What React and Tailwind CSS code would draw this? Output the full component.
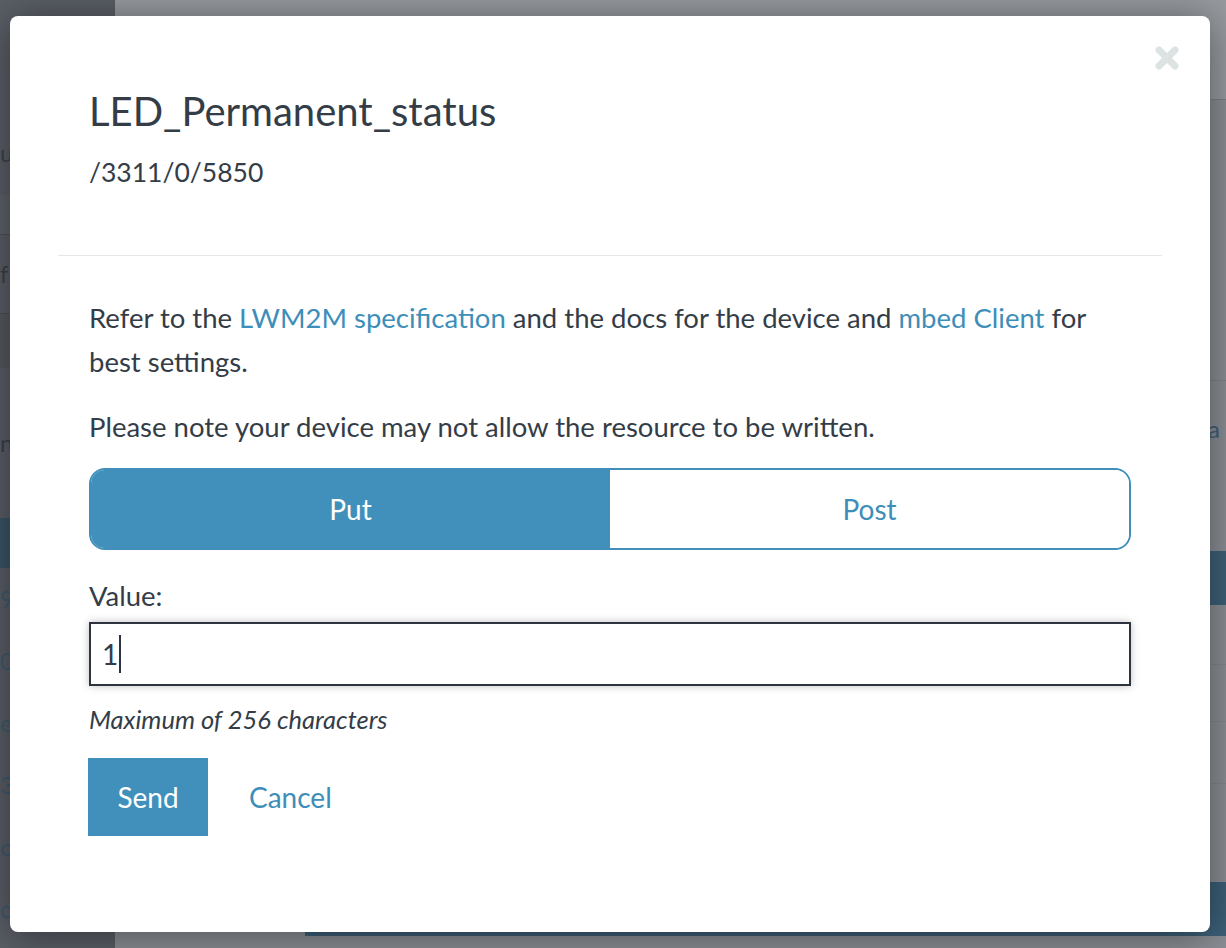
import React, { useState } from 'react';

const SIDE_ROWS = ['9.', '0.', 'e.', '3.', 'o.', 'c.'];

const Backdrop = () => {
  return (
    <div className="flex h-full w-full">
      <aside className="flex w-[115px] flex-col bg-[#5a5f66] text-[24px] text-[#3b4148]">
        <div className="flex h-[195px] items-end pb-[24px]">
          <span>u</span>
        </div>
        <div className="h-[40px] border-b border-[#4b5056] bg-[#5e636a]" />
        <div className="flex h-[79px] items-center border-b border-[#4b5056]">
          <span>f</span>
        </div>
        <div className="h-[54px] bg-[#555a60]" />
        <div className="flex h-[150px] items-center">
          <span>n</span>
        </div>
        <div className="h-[50px] bg-[#3b5566]" />
        {SIDE_ROWS.map((t) => (
          <div key={t} className="flex h-[62px] items-center text-[#3e5a6e]">
            <span>{t}</span>
          </div>
        ))}
      </aside>
      <main className="flex flex-1 flex-col bg-[#8b8f95]">
        <div className="h-[100px] border-b border-[#7e8287] bg-[#979ba0]" />
        <div className="h-[281px] border-b border-[#7e8287]" />
        <div className="flex h-[170px] items-start justify-end pt-[30px] pr-[6px] text-[24px] text-[#3f6077]">
          <span>a</span>
        </div>
        <div className="h-[54px] bg-[#3e6178]" />
        <div className="h-[60px] border-b border-[#83878c]" />
        <div className="h-[57px] border-b border-[#83878c]" />
        <div className="h-[62px] border-b border-[#83878c]" />
        <div className="h-[98px]" />
        <div className="ml-[190px] h-[54px] bg-[#3d6078]" />
      </main>
    </div>
  );
};

const CloseIcon = () => (
  <svg width="26" height="26" viewBox="0 0 26 26" fill="none">
    <path d="M5 5 L21 21 M21 5 L5 21" stroke="#dde3e3" strokeWidth="7" strokeLinecap="round" />
  </svg>
);

export default function App() {
  const [method, setMethod] = useState('put');

  return (
    <div className="relative h-[948px] w-[1226px] overflow-hidden font-['Lato','Open_Sans',sans-serif]">
      <Backdrop />

      <div className="absolute inset-0 flex items-start pl-[10px] pt-[16px]">
        <div className="relative flex h-[916px] w-[1200px] flex-col rounded-[8px] bg-white text-[#343d47] shadow-[0_4px_40px_rgba(0,0,0,0.45)]">
          <button className="absolute right-[30px] top-[29px]">
            <CloseIcon />
          </button>

          <div className="px-[79px] pt-[71px]">
            <h1 className="text-[40px] leading-[48px]">LED_Permanent_status</h1>
            <p className="mt-[19px] text-[26.5px] leading-[36px]">/3311/0/5850</p>
          </div>

          <div className="mx-[48px] mt-[65px] border-t border-[#e6e6e6]" />

          <div className="px-[79px] pt-[40px] text-[27.5px] leading-[44px]">
            <p>
              Refer to the <a className="text-[#3d8eb9]">LWM2M specification</a> and the docs for the device and{' '}
              <a className="text-[#3d8eb9]">mbed Client</a> for best settings.
            </p>
            <p className="mt-[21px]">Please note your device may not allow the resource to be written.</p>

            <div className="mt-[19px] flex h-[82px] overflow-hidden rounded-[16px] border-2 border-[#3f8fba] text-[28px]">
              <button
                onClick={() => setMethod('put')}
                className={`flex-1 ${method === 'put' ? 'bg-[#4190bb] text-white' : 'bg-white text-[#3d8eb9]'}`}
              >
                Put
              </button>
              <button
                onClick={() => setMethod('post')}
                className={`flex-1 ${method === 'post' ? 'bg-[#4190bb] text-white' : 'bg-white text-[#3d8eb9]'}`}
              >
                Post
              </button>
            </div>

            <label className="mt-[24px] block">Value:</label>
            <div className="mt-[4px] flex h-[64px] items-center border-2 border-[#2d3440] px-[11px] text-[28px] shadow-[0_0_8px_rgba(0,0,0,0.25)]">
              <span>1</span>
              <span className="ml-[1px] h-[38px] w-[2px] bg-[#2d3440]" />
            </div>
            <p className="mt-[15px] text-[25.5px] italic leading-[36px]">Maximum of 256 characters</p>

            <div className="mt-[21px] flex items-center">
              <button className="-ml-[1px] h-[78px] w-[120px] bg-[#4190bb] text-[28px] text-white">Send</button>
              <a className="ml-[41px] text-[28px] text-[#3d8eb9]">Cancel</a>
            </div>
          </div>
        </div>
      </div>
    </div>
  );
}
